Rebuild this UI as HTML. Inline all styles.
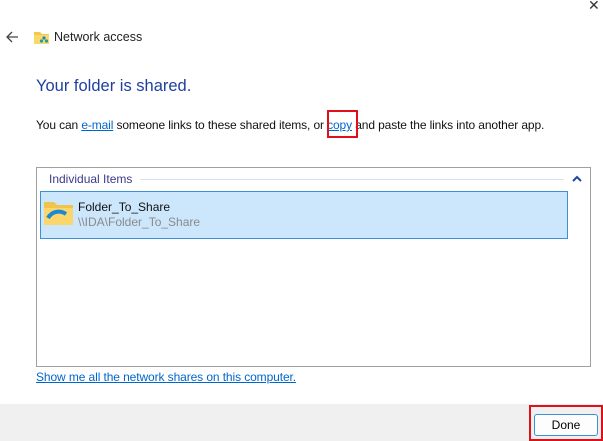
<!DOCTYPE html>
<html><head><style>
body{margin:0;width:603px;height:441px;background:#fff;font-family:"Liberation Sans",sans-serif;position:relative;overflow:hidden;color:#000}
.a{position:absolute;white-space:nowrap}
a{color:#0066cc;text-decoration:underline}
</style></head><body>
<div class="a" style="left:588px;top:-3px;font-size:14px;color:#333">✕</div>
<svg class="a" style="left:5px;top:30px" width="14" height="14"><path d="M13 7H2M7 2L2 7l5 5" stroke="#444" fill="none" stroke-width="1.3"/></svg>
<svg class="a" style="left:33px;top:29px" width="17" height="16"><path d="M1 3h6l2 2h7v10H1z" fill="#f3c94c"/><path d="M1 6h15v9H1z" fill="#fad86a"/><circle cx="11" cy="9" r="1.6" fill="#2a7bd0"/><circle cx="13.5" cy="12" r="1.6" fill="#1aa39a"/><circle cx="8.5" cy="12" r="1.6" fill="#1aa39a"/></svg>
<div class="a" style="left:54px;top:30px;font-size:12.5px;color:#222">Network access</div>
<div class="a" style="left:36px;top:77px;font-size:16.5px;color:#1f3f9f">Your folder is shared.</div>
<div class="a" style="left:36px;top:118px;font-size:12px;letter-spacing:-0.12px;color:#111">You can <a>e-mail</a> someone links to these shared items, or <a>copy</a> and paste the links into another app.</div>
<div class="a" style="left:327px;top:110px;width:27px;height:24px;border:2px solid #e0101a"></div>
<div class="a" style="left:36px;top:167px;width:553px;height:198px;border:1px solid #a0a0a0"></div>
<div class="a" style="left:49px;top:172px;font-size:12px;color:#3a3a8a">Individual Items</div>
<div class="a" style="left:140px;top:179px;width:424px;height:1px;background:#d8e2f0"></div>
<svg class="a" style="left:572px;top:175px" width="10" height="8"><path d="M1 6l4-4 4 4" stroke="#1a4a9a" stroke-width="2" fill="none"/></svg>
<div class="a" style="left:40px;top:191px;width:526px;height:46px;background:#cce6fb;border:1px solid #3d8fd6"></div>
<svg class="a" style="left:44px;top:200px" width="30" height="26"><path d="M0 2h10l3 3h16v20H0z" fill="#f0c34a"/><path d="M0 8h29v17H0z" fill="#fad66b"/><path d="M4 18c4-7 12-8 18-4" stroke="#1a8ad6" stroke-width="4" fill="none"/></svg>
<div class="a" style="left:78px;top:200px;font-size:12px;color:#111">Folder_To_Share</div>
<div class="a" style="left:78px;top:215px;font-size:12px;color:#8a8a8a">\\IDA\Folder_To_Share</div>
<div class="a" style="left:36px;top:370px;font-size:12px;letter-spacing:-0.1px"><a>Show me all the network shares on this computer.</a></div>
<div class="a" style="left:0;top:404px;width:603px;height:37px;background:#f0f0f0"></div>
<div class="a" style="left:529px;top:405px;width:70px;height:32px;border:2px solid #e0101a"></div>
<div class="a" style="left:534px;top:414px;width:62px;height:20px;border:1px solid #3d8fd6;border-radius:3px;background:#fdfdfd;font-size:12px;text-align:center;line-height:20px">Done</div>
</body></html>
